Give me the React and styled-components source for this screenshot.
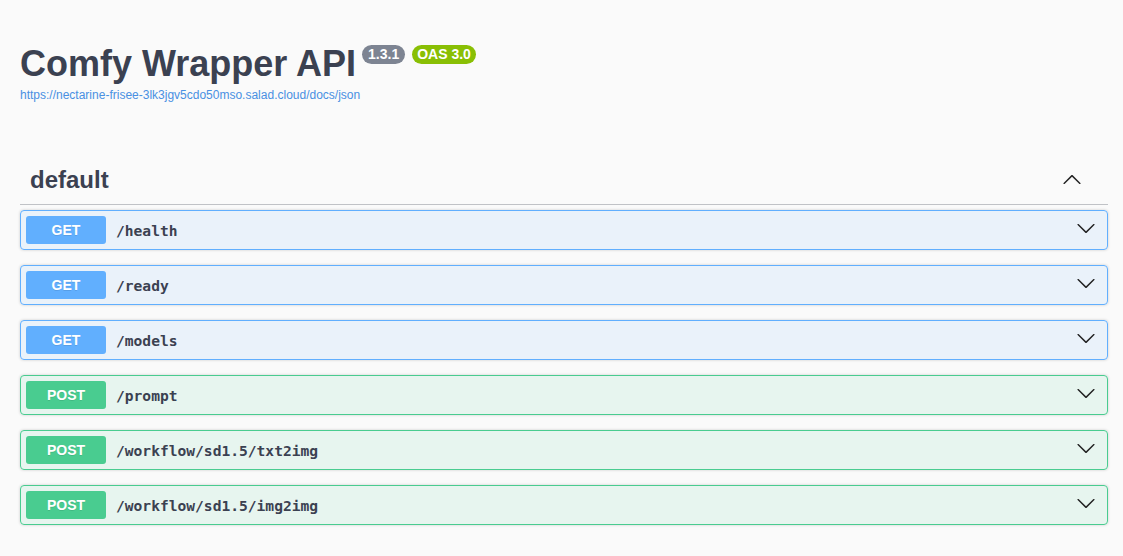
import styled, { createGlobalStyle } from 'styled-components';

const GlobalStyle = createGlobalStyle`
  html, body {
    margin: 0;
    padding: 0;
    background: #fafafa;
  }
  body {
    font-family: "Liberation Sans", Arial, sans-serif;
    color: #3b4151;
  }
`;

const Wrapper = styled.div`
  padding: 0 15px 0 20px;
`;

const Info = styled.div`
  padding-top: 43px;
  margin-bottom: 54px;
`;

const TitleRow = styled.div`
  display: flex;
  align-items: flex-start;
  gap: 6px;
`;

const Title = styled.h2`
  margin: 0;
  font-size: 36px;
  line-height: 41px;
  font-weight: 700;
  color: #3b4151;
`;

const Badge = styled.small`
  display: inline-block;
  margin-top: 2px;
  margin-left: ${p => (p.$stamp ? '1px' : '0')};
  padding: 2px ${p => (p.$stamp ? '5px' : '6px')};
  border-radius: 57px;
  background: ${p => (p.$stamp ? '#89bf04' : '#7d8492')};
  color: #fff;
  font-size: 14px;
  line-height: 15px;
  font-weight: 700;
  white-space: pre;
`;

const BaseUrl = styled.a`
  display: block;
  margin-top: 4px;
  font-size: 12px;
  line-height: 14px;
  color: #4990e2;
  text-decoration: none;
`;

const Tag = styled.div`
  display: flex;
  align-items: center;
  justify-content: space-between;
  padding: 10px 26px 10px 10px;
  margin-bottom: 5px;
  border-bottom: 1px solid rgba(59, 65, 81, 0.3);
`;

const TagName = styled.h3`
  margin: 0;
  font-size: 24px;
  line-height: 28px;
  font-weight: 700;
  color: #3b4151;
`;

const Arrow = styled.svg`
  display: block;
  width: 20px;
  height: 20px;
  fill: #222;
  margin-bottom: ${p => (p.$up ? '0' : '5px')};
  transform: ${p => (p.$up ? 'rotate(180deg)' : 'none')};
`;

const colors = {
  GET: { main: '#61affe', bg: 'rgba(97, 175, 254, 0.1)' },
  POST: { main: '#49cc90', bg: 'rgba(73, 204, 144, 0.1)' },
};

const Op = styled.div`
  display: flex;
  align-items: center;
  margin-bottom: 15px;
  padding: 5px 11px 5px 5px;
  border: 1px solid ${p => colors[p.$method].main};
  border-radius: 4px;
  background: ${p => colors[p.$method].bg};
  box-shadow: 0 0 3px rgba(0, 0, 0, 0.19);
`;

const Method = styled.span`
  min-width: 80px;
  height: 28px;
  line-height: 28px;
  text-align: center;
  border-radius: 3px;
  background: ${p => colors[p.$method].main};
  color: #fff;
  font-size: 14px;
  font-weight: 700;
  text-shadow: 0 1px 0 rgba(0, 0, 0, 0.1);
`;

const Path = styled.span`
  flex: 1;
  padding: 0 10px;
  font-family: "DejaVu Sans Mono", "Liberation Mono", monospace;
  font-size: 14.6px;
  font-weight: 700;
  color: #3b4151;
`;

const chevron = 'M17.418 6.109c.272-.268.709-.268.979 0s.271.701 0 .969l-7.908 7.83c-.27.268-.707.268-.979 0l-7.908-7.83c-.27-.268-.27-.701 0-.969.271-.268.709-.268.979 0L10 13.25l7.418-7.141z';

const ops = [
  ['GET', '/health'],
  ['GET', '/ready'],
  ['GET', '/models'],
  ['POST', '/prompt'],
  ['POST', '/workflow/sd1.5/txt2img'],
  ['POST', '/workflow/sd1.5/img2img'],
];

export default function App() {
  return (
    <Wrapper>
      <GlobalStyle />
      <Info>
        <TitleRow>
          <Title>Comfy Wrapper API</Title>
          <Badge>1.3.1</Badge>
          <Badge $stamp>OAS 3.0</Badge>
        </TitleRow>
        <BaseUrl href="#">https://nectarine-frisee-3lk3jgv5cdo50mso.salad.cloud/docs/json</BaseUrl>
      </Info>

      <Tag>
        <TagName>default</TagName>
        <Arrow $up viewBox="0 0 20 20"><path d={chevron} /></Arrow>
      </Tag>

      {ops.map(([method, path]) => (
        <Op key={path} $method={method}>
          <Method $method={method}>{method}</Method>
          <Path>{path}</Path>
          <Arrow viewBox="0 0 20 20"><path d={chevron} /></Arrow>
        </Op>
      ))}
    </Wrapper>
  );
}
